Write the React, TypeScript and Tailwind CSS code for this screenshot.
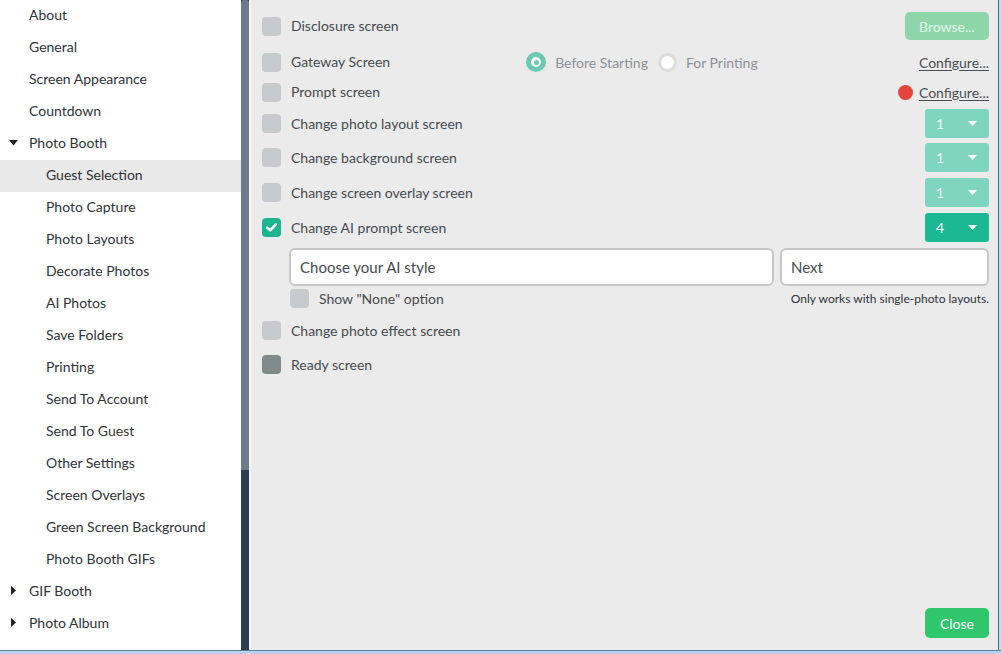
import React from "react";

const font = { fontFamily: "Lato, 'Open Sans', sans-serif" };

function Caret({ dir }: { dir: "down" | "right" }) {
  if (dir === "down")
    return (
      <svg width="9" height="6" viewBox="0 0 9 6" className="absolute left-[9px] top-[12px]">
        <path d="M0 0 L9 0 L4.5 5.5 Z" fill="#222" />
      </svg>
    );
  return (
    <svg width="5" height="9" viewBox="0 0 5 9" className="absolute left-[11px] top-[10px]">
      <path d="M0 0 L5 4.5 L0 9 Z" fill="#222" />
    </svg>
  );
}

type Item = { label: string; level: 0 | 1; caret?: "down" | "right"; selected?: boolean };

const items: Item[] = [
  { label: "About", level: 0 },
  { label: "General", level: 0 },
  { label: "Screen Appearance", level: 0 },
  { label: "Countdown", level: 0 },
  { label: "Photo Booth", level: 0, caret: "down" },
  { label: "Guest Selection", level: 1, selected: true },
  { label: "Photo Capture", level: 1 },
  { label: "Photo Layouts", level: 1 },
  { label: "Decorate Photos", level: 1 },
  { label: "AI Photos", level: 1 },
  { label: "Save Folders", level: 1 },
  { label: "Printing", level: 1 },
  { label: "Send To Account", level: 1 },
  { label: "Send To Guest", level: 1 },
  { label: "Other Settings", level: 1 },
  { label: "Screen Overlays", level: 1 },
  { label: "Green Screen Background", level: 1 },
  { label: "Photo Booth GIFs", level: 1 },
  { label: "GIF Booth", level: 0, caret: "right" },
  { label: "Photo Album", level: 0, caret: "right" },
];

function Check({ state = "off" }: { state?: "off" | "on" | "dark" }) {
  if (state === "on")
    return (
      <div className="w-[19px] h-[19px] rounded-[4px] bg-[#1bb591] flex items-center justify-center shrink-0">
        <svg width="11" height="9" viewBox="0 0 11 9">
          <path d="M1.2 4.6 L4.2 7.4 L9.8 1.4" stroke="#fff" strokeWidth="2.4" fill="none" strokeLinecap="round" strokeLinejoin="round" />
        </svg>
      </div>
    );
  return (
    <div
      className={
        "w-[19px] h-[19px] rounded-[4px] shrink-0 " +
        (state === "dark" ? "bg-[#7f8b8b]" : "bg-[#c6cace]")
      }
    />
  );
}

function Dropdown({ value, dark }: { value: string; dark?: boolean }) {
  return (
    <div
      className={
        "w-[64px] h-[29px] rounded-[3px] flex items-center justify-between pl-[11px] pr-[12px] " +
        (dark ? "bg-[#1bb893] text-white" : "bg-[#80d5c1] text-[#eefaf6]")
      }
    >
      <span className="text-[14px]">{value}</span>
      <svg width="9" height="5" viewBox="0 0 9 5">
        <path d="M0 0 L9 0 L4.5 5 Z" fill="#fff" />
      </svg>
    </div>
  );
}

function Label({ children }: { children: React.ReactNode }) {
  return <span className="text-[14px] text-[#454a4f] ml-[10px] leading-none">{children}</span>;
}

export default function App() {
  return (
    <div className="w-[1001px] h-[654px] flex flex-col bg-white overflow-hidden" style={font}>
      <div className="flex flex-1 min-h-0">
        {/* Sidebar */}
        <div className="w-[241px] shrink-0 bg-white flex flex-col">
          {items.map((it) => (
            <div
              key={it.label}
              className={
                "relative h-[32px] flex items-center pb-[4px] shrink-0 text-[14px] text-[#2f3337] " +
                (it.selected ? "bg-[#e9e9e9]" : "")
              }
            >
              {it.caret && <Caret dir={it.caret} />}
              <span className={it.level === 0 ? "pl-[29px]" : "pl-[46px]"}>{it.label}</span>
            </div>
          ))}
        </div>
        {/* Scrollbar */}
        <div className="w-[8px] shrink-0 flex flex-col bg-[#2d3e50]">
          <div className="h-[470px] bg-[#6e7c89] rounded-t-[3px]" />
        </div>
        <div className="w-[2px] shrink-0 bg-[#f4f4f4]" />
        {/* Main */}
        <div className="flex-1 bg-[#ebebeb] flex flex-col pl-[11px] pr-[9px] pb-[12px]">
          {/* Row 1 */}
          <div className="mt-[12px] h-[28px] flex items-center">
            <Check />
            <Label>Disclosure screen</Label>
            <div className="ml-auto w-[84px] h-[28px] rounded-[5px] bg-[#8fd5aa] text-[#e3f5ea] text-[14px] flex items-center justify-center">
              Browse...
            </div>
          </div>
          {/* Row 2 */}
          <div className="h-[44px] flex items-center">
            <Check />
            <Label>Gateway Screen</Label>
            <div className="ml-[136px] flex items-center">
              <div className="w-[20px] h-[20px] rounded-full bg-[#6cc8b1] flex items-center justify-center">
                <div className="w-[10px] h-[10px] rounded-full bg-white flex items-center justify-center">
                  <div className="w-[5px] h-[5px] rounded-full bg-[#6cc8b1]" />
                </div>
              </div>
              <span className="ml-[9px] text-[14px] text-[#8c9096]">Before Starting</span>
              <div className="ml-[10px] w-[19px] h-[19px] rounded-full bg-white border-[3px] border-[#dcdcdc]" />
              <span className="ml-[9px] text-[14px] text-[#8c9096]">For Printing</span>
            </div>
            <span className="ml-auto text-[14px] text-[#4a4e53] underline underline-offset-2">Configure...</span>
          </div>
          {/* Row 3 */}
          <div className="h-[16px] flex items-center">
            <Check />
            <Label>Prompt screen</Label>
            <div className="ml-auto flex items-center">
              <div className="w-[15px] h-[15px] rounded-full bg-[#e4443a]" />
              <span className="ml-[6px] text-[14px] text-[#4a4e53] underline underline-offset-2">Configure...</span>
            </div>
          </div>
          {/* Row 4 */}
          <div className="mt-[9px] h-[29px] flex items-center">
            <Check />
            <Label>Change photo layout screen</Label>
            <div className="ml-auto">
              <Dropdown value="1" />
            </div>
          </div>
          <div className="mt-[5px] h-[29px] flex items-center">
            <Check />
            <Label>Change background screen</Label>
            <div className="ml-auto">
              <Dropdown value="1" />
            </div>
          </div>
          <div className="mt-[6px] h-[29px] flex items-center">
            <Check />
            <Label>Change screen overlay screen</Label>
            <div className="ml-auto">
              <Dropdown value="1" />
            </div>
          </div>
          <div className="mt-[6px] h-[29px] flex items-center">
            <Check state="on" />
            <Label>Change AI prompt screen</Label>
            <div className="ml-auto">
              <Dropdown value="4" dark />
            </div>
          </div>
          {/* Inputs */}
          <div className="mt-[6px] h-[38px] flex pl-[27px] gap-[6px]">
            <div className="flex-1 bg-white border-2 border-[#c7c7c7] rounded-[6px] flex items-center px-[9px] text-[15px] text-[#474b50]">
              Choose your AI style
            </div>
            <div className="w-[209px] bg-white border-2 border-[#c7c7c7] rounded-[6px] flex items-center px-[9px] text-[15px] text-[#474b50]">
              Next
            </div>
          </div>
          <div className="mt-[3px] h-[19px] flex items-center pl-[28px]">
            <Check />
            <Label>Show "None" option</Label>
            <span className="ml-auto text-[12px] text-[#2f3337]">Only works with single-photo layouts.</span>
          </div>
          <div className="mt-[13px] h-[19px] flex items-center">
            <Check />
            <Label>Change photo effect screen</Label>
          </div>
          <div className="mt-[15px] h-[19px] flex items-center">
            <Check state="dark" />
            <Label>Ready screen</Label>
          </div>
          <div className="mt-auto flex justify-end">
            <div className="w-[64px] h-[30px] rounded-[5px] bg-[#2fc66c] text-white text-[14px] flex items-center justify-center">
              Close
            </div>
          </div>
        </div>
        <div className="w-[1px] shrink-0 bg-[#4a6686]" />
        <div className="w-[2px] shrink-0 bg-[#c9dbee]" />
      </div>
      <div className="h-[1px] bg-[#5d7fa5] shrink-0" />
      <div className="h-[3px] bg-[#b7d0ec] shrink-0" />
    </div>
  );
}
